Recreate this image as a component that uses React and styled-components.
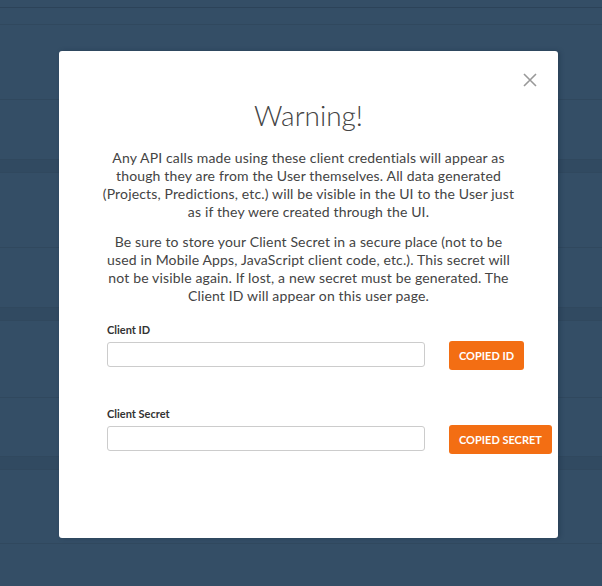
import React from "react";
import styled, { createGlobalStyle } from "styled-components";

const GlobalStyle = createGlobalStyle`
  html, body {
    margin: 0;
    padding: 0;
    background-color: #344e66;
    font-family: "Lato", "Liberation Sans", sans-serif;
  }
`;

const Page = styled.div`
  position: relative;
  width: 602px;
  height: 586px;
  overflow: hidden;
  background-color: #344e66;
`;

const TopBar = styled.div`
  height: 7px;
  border-bottom: 1px solid #2c4359;
`;

const Row = styled.div`
  height: ${(p) => p.h}px;
  border-bottom: 1px solid #30485e;
`;

const Band = styled.div`
  height: 12px;
  background-color: #314a61;
  border-bottom: 1px solid #30485e;
`;

const Overlay = styled.div`
  position: absolute;
  inset: 0;
  display: flex;
  justify-content: center;
  align-items: flex-start;
  padding-top: 51px;
`;

const Modal = styled.div`
  position: relative;
  box-sizing: border-box;
  width: 499px;
  height: 487px;
  margin-left: 15px;
  background-color: #ffffff;
  border-radius: 3px;
  box-shadow: 2px 0 4px rgba(20, 40, 60, 0.35);
  padding: 46px 41px 0;
`;

const Close = styled.button`
  position: absolute;
  top: 20px;
  right: 19px;
  width: 18px;
  height: 18px;
  padding: 0;
  border: none;
  background: transparent;
  cursor: pointer;
  display: flex;
  align-items: center;
  justify-content: center;
`;

const Title = styled.h1`
  margin: 0 0 16px;
  text-align: center;
  font-size: 28px;
  font-weight: 300;
  color: #444444;
  line-height: 36px;
`;

const Paragraph = styled.p`
  margin: 0 0 12px;
  text-align: center;
  font-size: 14px;
  line-height: 18px;
  letter-spacing: 0.15px;
  color: #444444;
`;

const Fields = styled.div`
  margin-left: 7px;
`;

const Field = styled.div`
  margin-top: ${(p) => p.top}px;
`;

const Label = styled.label`
  display: block;
  font-size: 11px;
  line-height: 13px;
  font-weight: 700;
  color: #333333;
  margin-bottom: 3px;
`;

const InputRow = styled.div`
  display: flex;
  align-items: center;
  gap: 24px;
`;

const Input = styled.input`
  box-sizing: border-box;
  flex-shrink: 0;
  width: 318px;
  height: 25px;
  border: 1px solid #cccccc;
  border-radius: 3px;
  padding: 0 8px;
  font-family: inherit;
  font-size: 12px;
  outline: none;
`;

const CopyButton = styled.button`
  flex-shrink: 0;
  height: 29px;
  padding: 0 10px;
  margin-top: 2px;
  border: none;
  border-radius: 3px;
  background-color: #f36e13;
  color: #ffffff;
  font-family: inherit;
  font-size: 11px;
  font-weight: 700;
  text-transform: uppercase;
  white-space: nowrap;
  cursor: pointer;
`;

const App = () => {
  return (
    <>
      <GlobalStyle />
      <Page>
        <TopBar />
        <Row h={16} />
        <Row h={74} />
        <Row h={59} />
        <Band />
        <Row h={74} />
        <Row h={59} />
        <Band />
        <Row h={76} />
        <Row h={58} />
        <Band />
        <Row h={73} />

        <Overlay>
          <Modal>
            <Close aria-label="Close">
              <svg width="14" height="14" viewBox="0 0 14 14">
                <path
                  d="M1 1 L13 13 M13 1 L1 13"
                  stroke="#999999"
                  strokeWidth="1.6"
                  fill="none"
                />
              </svg>
            </Close>
            <Title>Warning!</Title>
            <Paragraph>
              Any API calls made using these client credentials will appear as
              though they are from the User themselves. All data generated
              (Projects, Predictions, etc.) will be visible in the UI to the
              User just as if they were created through the UI.
            </Paragraph>
            <Paragraph>
              Be sure to store your Client Secret in a secure place (not to be
              used in Mobile Apps, JavaScript client code, etc.). This secret
              will not be visible again. If lost, a new secret must be
              generated. The Client ID will appear on this user page.
            </Paragraph>
            <Fields>
              <Field top={18}>
                <Label>Client ID</Label>
                <InputRow>
                  <Input readOnly />
                  <CopyButton>Copied ID</CopyButton>
                </InputRow>
              </Field>
              <Field top={37}>
                <Label>Client Secret</Label>
                <InputRow>
                  <Input readOnly />
                  <CopyButton>Copied Secret</CopyButton>
                </InputRow>
              </Field>
            </Fields>
          </Modal>
        </Overlay>
      </Page>
    </>
  );
};

export default App;
